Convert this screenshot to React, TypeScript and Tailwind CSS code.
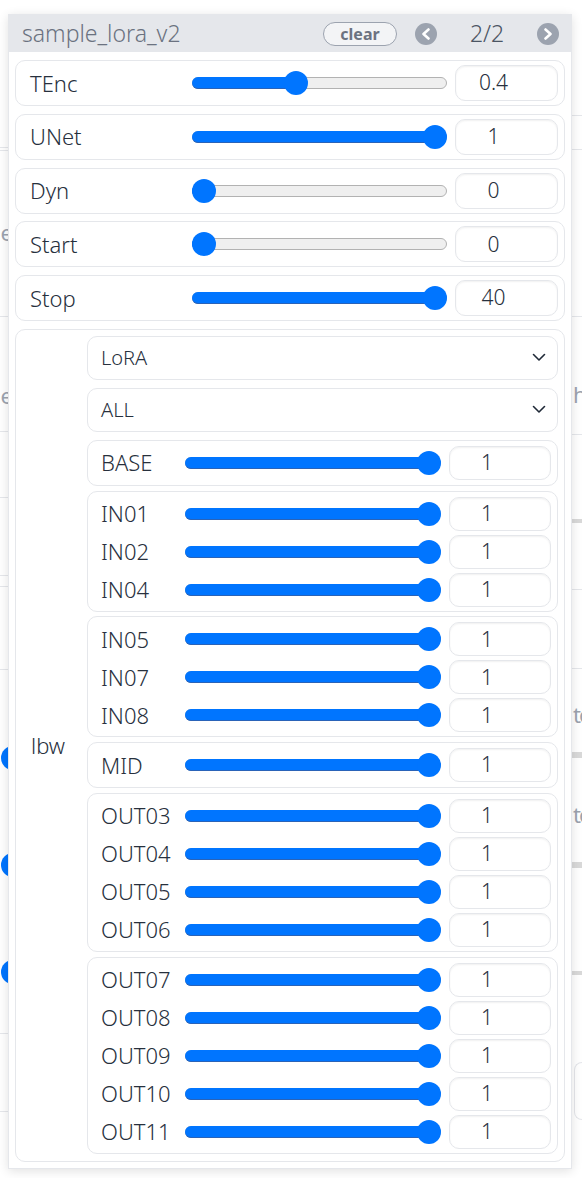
import React from "react";

type Row = { label: string; value: number; max: number; text: string };

const topRows: Row[] = [
  { label: "TEnc", value: 0.4, max: 1, text: "0.4" },
  { label: "UNet", value: 1, max: 1, text: "1" },
  { label: "Dyn", value: 0, max: 1, text: "0" },
  { label: "Start", value: 0, max: 1, text: "0" },
  { label: "Stop", value: 40, max: 40, text: "40" },
];

const groups: string[][] = [
  ["BASE"],
  ["IN01", "IN02", "IN04"],
  ["IN05", "IN07", "IN08"],
  ["MID"],
  ["OUT03", "OUT04", "OUT05", "OUT06"],
  ["OUT07", "OUT08", "OUT09", "OUT10", "OUT11"],
];

function Slider({ value, max, width }: { value: number; max: number; width: string }) {
  const pct = value / max;
  return (
    <div className={`relative h-6 flex-none ${width}`}>
      <div className="absolute left-0 right-0 top-[6px] h-3 rounded-full bg-[#efefef] border border-[#b2b2b2]" />
      <div
        className="absolute left-0 top-[6px] h-3 rounded-full bg-[#0075ff] border-b border-[#2a63b8]"
        style={{ width: `calc(12px + ${pct} * (100% - 24px))` }}
      />
      <div
        className="absolute top-0 size-6 rounded-full bg-[#0075ff]"
        style={{ left: `calc(${pct} * (100% - 24px))` }}
      />
    </div>
  );
}

function NumBox({ text, className }: { text: string; className: string }) {
  return (
    <div
      className={`flex-none flex items-center justify-center pr-[26px] rounded-[10px] border border-[#e5e7eb] bg-white shadow-[inset_0_1px_2px_rgba(0,0,0,0.06)] text-[21px] font-light text-[#27303d] ${className}`}
    >
      {text}
    </div>
  );
}

function Chevron() {
  return (
    <svg width="14" height="9" viewBox="0 0 14 9" fill="none" className="flex-none">
      <path d="M1.5 1.5l5.5 5.5 5.5-5.5" stroke="#1f2937" strokeWidth="1.6" strokeLinecap="round" strokeLinejoin="round" />
    </svg>
  );
}

function Dropdown({ text }: { text: string }) {
  return (
    <div className="h-[44px] flex items-center pl-[13px] pr-[11px] rounded-[10px] border border-[#e5e7eb] bg-white">
      <span className="flex-1 text-[20px] font-light text-[#27303d]">{text}</span>
      <Chevron />
    </div>
  );
}

function NavDot({ dir }: { dir: "l" | "r" }) {
  return (
    <div className="size-[22px] rounded-full bg-[#9ca3af] flex items-center justify-center">
      <svg width="10" height="12" viewBox="0 0 10 12" fill="none">
        <path
          d={dir === "l" ? "M7.5 1.5L2.5 6l5 4.5" : "M2.5 1.5L7.5 6l-5 4.5"}
          stroke="white"
          strokeWidth="2.6"
          strokeLinecap="round"
          strokeLinejoin="round"
        />
      </svg>
    </div>
  );
}

function LeftStrip() {
  return (
    <div className="w-[8px] flex-none flex flex-col overflow-hidden text-[22px] leading-[28px] text-[#9ca3af]">
      <div className="h-[147px] flex-none" />
      <div className="h-px flex-none bg-[#e5e7eb]" />
      <div className="h-[2px] flex-none" />
      <div className="h-px flex-none bg-[#e5e7eb]" />
      <div className="h-[67px] flex-none" />
      <div className="h-[28px] flex-none flex justify-end"><span className="-mr-[5px]">e</span></div>
      <div className="h-[70px] flex-none" />
      <div className="h-px flex-none bg-[#e5e7eb]" />
      <div className="h-[64px] flex-none" />
      <div className="h-[28px] flex-none flex justify-end"><span className="-mr-[5px]">e</span></div>
      <div className="h-[22px] flex-none" />
      <div className="h-px flex-none bg-[#e5e7eb]" />
      <div className="h-[65px] flex-none" />
      <div className="h-px flex-none bg-[#e5e7eb]" />
      <div className="h-[77px] flex-none" />
      <div className="h-px flex-none bg-[#e5e7eb]" />
      <div className="h-[10px] flex-none" />
      <div className="h-px flex-none bg-[#e5e7eb]" />
      <div className="h-[82px] flex-none" />
      <div className="h-px flex-none bg-[#e5e7eb]" />
      <div className="h-[76px] flex-none" />
      <div className="h-6 flex-none flex justify-end"><div className="size-6 flex-none -mr-[17px] rounded-full bg-[#0075ff]" /></div>
      <div className="h-[83px] flex-none" />
      <div className="h-6 flex-none flex justify-end"><div className="size-6 flex-none -mr-[17px] rounded-full bg-[#0075ff]" /></div>
      <div className="h-[83px] flex-none" />
      <div className="h-6 flex-none flex justify-end"><div className="size-6 flex-none -mr-[17px] rounded-full bg-[#0075ff]" /></div>
      <div className="h-[49px] flex-none" />
      <div className="h-px flex-none bg-[#e5e7eb]" />
      <div className="h-[77px] flex-none" />
      <div className="h-px flex-none bg-[#e5e7eb]" />
    </div>
  );
}

function RightStrip() {
  return (
    <div className="w-[10px] flex-none flex flex-col overflow-hidden text-[22px] leading-[28px] text-[#9ca3af]">
      <div className="h-[115px] flex-none" />
      <div className="h-px flex-none bg-[#e5e7eb]" />
      <div className="h-[33px] flex-none" />
      <div className="h-px flex-none bg-[#e5e7eb]" />
      <div className="h-[166px] flex-none" />
      <div className="h-px flex-none bg-[#e5e7eb]" />
      <div className="h-[63px] flex-none" />
      <div className="h-[28px] flex-none pl-[1px]">h</div>
      <div className="h-[26px] flex-none" />
      <div className="h-px flex-none bg-[#e5e7eb]" />
      <div className="h-[84px] flex-none" />
      <div className="h-[4px] flex-none bg-[#d9d9d9]" />
      <div className="h-[66px] flex-none" />
      <div className="h-px flex-none bg-[#e5e7eb]" />
      <div className="h-[78px] flex-none" />
      <div className="h-px flex-none bg-[#e5e7eb]" />
      <div className="h-[31px] flex-none" />
      <div className="h-[28px] flex-none pl-[1px] tracking-[-2px] whitespace-nowrap">te</div>
      <div className="h-[24px] flex-none" />
      <div className="h-[6px] flex-none bg-[#d9d9d9]" />
      <div className="h-[42px] flex-none" />
      <div className="h-[28px] flex-none pl-[1px] tracking-[-2px] whitespace-nowrap">te</div>
      <div className="h-[34px] flex-none" />
      <div className="h-[6px] flex-none bg-[#d9d9d9]" />
      <div className="h-[103px] flex-none" />
      <div className="h-[4px] flex-none bg-[#d9d9d9]" />
      <div className="h-[87px] flex-none" />
      <div className="h-[58px] flex-none ml-[2px] rounded-l-[22px] border border-r-0 border-[#e5e7eb]" />
    </div>
  );
}

export default function App() {
  return (
    <div className="w-[582px] h-[1178px] bg-white flex overflow-hidden font-['Noto_Sans','Liberation_Sans',sans-serif]">
      <LeftStrip />

      {/* popup */}
      <div className="relative z-10 w-[564px] flex-none self-start mt-[14px] bg-white border border-[#e5e7eb] shadow-[0_2px_10px_rgba(0,0,0,0.12)]">
        <div className="h-[37px] flex items-center bg-[#e5e7eb] pl-[13px] pr-[12px]">
          <span className="flex-1 text-[23px] leading-none font-light text-[#6b7280]">sample_lora_v2</span>
          <div className="h-[24px] w-[74px] flex items-center justify-center rounded-full border-[1.5px] border-[#9ca3af] bg-[#f3f4f6] text-[16px] font-bold text-[#6b7280]">
            clear
          </div>
          <div className="w-[18px]" />
          <NavDot dir="l" />
          <span className="w-[100px] text-center text-[23px] leading-none font-light text-[#4b5563]">2/2</span>
          <NavDot dir="r" />
        </div>

        <div className="flex flex-col gap-[7.75px] px-[6px] pt-[8px] pb-[6px]">
          {topRows.map((r) => (
            <div key={r.label} className="h-[46px] flex items-center pl-[14px] pr-[6px] rounded-[10px] border border-[#e5e7eb]">
              <span className="w-[162px] flex-none text-[22px] font-light text-[#27303d]">{r.label}</span>
              <Slider value={r.value} max={r.max} width="w-[255px]" />
              <div className="w-[8px]" />
              <NumBox text={r.text} className="w-[103px] h-[36px]" />
            </div>
          ))}

          <div className="flex rounded-[10px] border border-[#e5e7eb]">
            <div className="w-[71px] flex-none flex items-center pl-[15px] text-[22px] font-light text-[#27303d]">lbw</div>
            <div className="flex-1 flex flex-col pt-[6px] pb-[7px] pr-[6px]">
              <Dropdown text="LoRA" />
              <div className="h-[8px]" />
              <Dropdown text="ALL" />
              <div className="h-[8px]" />
              <div className="flex flex-col gap-[4.8px]">
                {groups.map((g) => (
                  <div
                    key={g[0]}
                    className={`flex flex-col gap-[4px] pt-[5px] ${g.length === 1 ? "pb-[5px]" : "pb-[4px]"} pl-[13px] pr-[6px] rounded-[10px] border border-[#e5e7eb]`}
                  >
                    {g.map((name) => (
                      <div key={name} className="h-[34px] flex items-center">
                        <span className="w-[84px] flex-none text-[22px] font-light text-[#27303d]">{name}</span>
                        <Slider value={1} max={1} width="w-[256px]" />
                        <div className="w-[8px]" />
                        <NumBox text="1" className="w-[102px] h-[34px]" />
                      </div>
                    ))}
                  </div>
                ))}
              </div>
            </div>
          </div>
        </div>
      </div>

      <RightStrip />
    </div>
  );
}
